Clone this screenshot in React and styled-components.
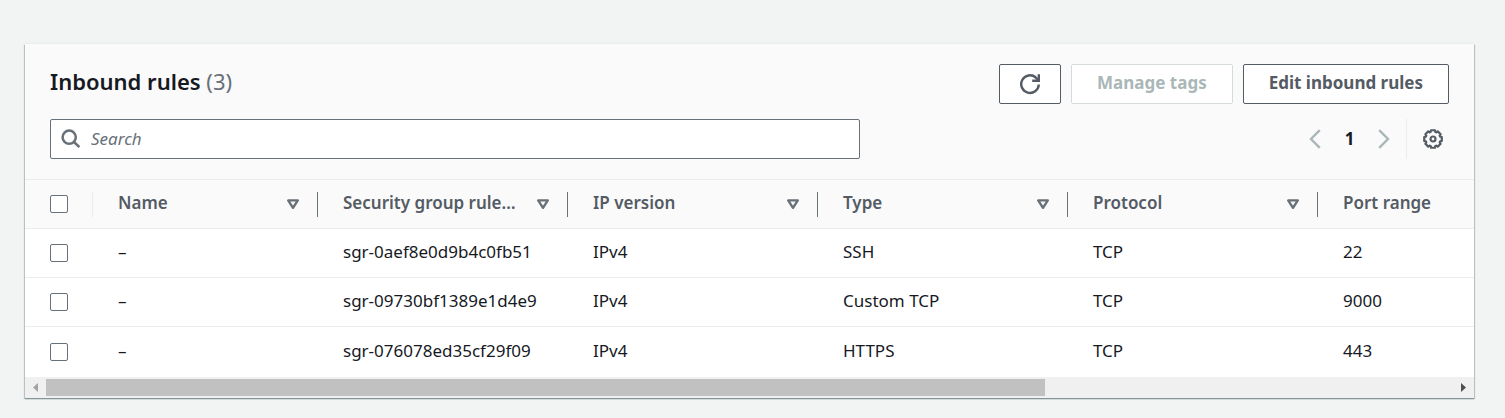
import React from "react";
import styled, { createGlobalStyle } from "styled-components";

const GlobalStyle = createGlobalStyle`
  * { box-sizing: border-box; }
  body {
    margin: 0;
    background: #f2f3f3;
    color: #16191f;
    font-family: "Noto Sans", "Open Sans", sans-serif;
    font-size: 17px;
    line-height: 24px;
  }
  button, input { font: inherit; }
`;

const Page = styled.main`
  padding: 44px 31px 19px 25px;
`;

const Panel = styled.section`
  background: #fff;
  overflow: hidden;
  box-shadow: 0 1px 1px 0 #879596, 1px 1px 1px 0 #c3cccd, -1px 1px 1px 0 #c3cccd, 0 -1px 1px 0 #eaeded;
`;

const Header = styled.header`
  display: flex;
  flex-direction: column;
  gap: 15px;
  padding: 20px 25px;
  background: #fafafa;
  border-bottom: 1px solid #eaeded;
`;

const HeaderRow = styled.div`
  display: flex;
  justify-content: space-between;
`;

const Title = styled.h2`
  margin: 0;
  font-size: 22px;
  line-height: 34px;
  font-weight: 600;
`;

const Count = styled.span`
  color: #687078;
  font-weight: 400;
`;

const Actions = styled.div`
  display: flex;
  gap: 10px;
`;

const Button = styled.button`
  display: flex;
  align-items: center;
  justify-content: center;
  height: 40px;
  padding: 0 25px 2px;
  border: 1px solid #545b64;
  border-radius: 2px;
  background: #fff;
  color: #545b64;
  font-weight: 700;
  white-space: nowrap;
  &:disabled { border-color: #d5dbdb; color: #aab7b8; }
`;

const RefreshButton = styled(Button)`
  width: 62px;
  padding: 0;
`;

const SearchBox = styled.label`
  display: flex;
  align-items: center;
  gap: 10px;
  width: 810px;
  height: 40px;
  padding: 0 10px;
  border: 1px solid #687078;
  border-radius: 2px;
  background: #fff;
  color: #687078;
`;

const SearchInput = styled.input`
  flex: 1;
  min-width: 0;
  padding: 0;
  border: 0;
  outline: 0;
  background: transparent;
  color: #16191f;
  &::placeholder { color: #687078; font-style: italic; opacity: 1; }
`;

const Pager = styled.nav`
  display: flex;
  align-items: center;
  height: 40px;
`;

const IconButton = styled.button`
  display: flex;
  align-items: center;
  justify-content: center;
  width: 32px;
  height: 32px;
  padding: 0;
  border: 0;
  background: transparent;
  color: #545b64;
  &:disabled { color: #aab7b8; }
`;

const PageNumber = styled.span`
  width: 37px;
  text-align: center;
  font-size: 17px;
  font-weight: 700;
`;

const Preferences = styled.div`
  display: flex;
  align-items: center;
  height: 40px;
  margin-left: 6px;
  padding-left: 10px;
  border-left: 1px solid #eaeded;
`;

const TableViewport = styled.div`
  overflow: hidden;
`;

const Table = styled.table`
  width: 1543px;
  table-layout: fixed;
  border-collapse: separate;
  border-spacing: 0;
`;

const Column = styled.col`
  width: ${(p) => p.$width}px;
`;

const HeadCell = styled.th`
  height: 49px;
  padding: 0;
  background: #fafafa;
  border-bottom: 1px solid #eaeded;
  color: #545b64;
  font-size: 17px;
  font-weight: 600;
  text-align: left;
`;

const HeadContent = styled.div`
  display: flex;
  align-items: center;
  justify-content: space-between;
  height: 25px;
  padding: 0 17px 0 25px;
  border-right: 1px solid ${(p) => (p.$light ? "#eaeded" : "#687078")};
`;

const HeadLabel = styled.span`
  padding-bottom: 2px;
  white-space: nowrap;
`;

const Cell = styled.td`
  height: 49px;
  padding: 0 25px 2px;
  border-bottom: 1px solid #eaeded;
  white-space: nowrap;
  tr:last-child & { height: 50px; border-bottom: 0; }
`;

const CheckCell = styled(Cell)`
  padding-bottom: 0;
`;

const Checkbox = styled.input`
  appearance: none;
  display: block;
  width: 18px;
  height: 18px;
  margin: 0;
  border: 1px solid #687078;
  border-radius: 2px;
  background: #fff;
  &:checked { background: #0073bb; }
`;

const ScrollBar = styled.div`
  display: grid;
  grid-template-columns: 21px 1fr 21px;
  align-items: center;
  justify-items: center;
  height: 21px;
  background: #f0f0f0;
`;

const Track = styled.div`
  width: 100%;
`;

const Thumb = styled.div`
  width: 71%;
  height: 17px;
  background: #c1c1c1;
`;

const SearchIcon = () => (
  <svg width="20" height="20" viewBox="0 0 20 20" fill="none" stroke="currentColor" strokeWidth="2.5" aria-hidden="true">
    <circle cx="8.2" cy="8.2" r="6.6" />
    <path d="M13 13l5.4 5.2" />
  </svg>
);

const RefreshIcon = () => (
  <svg width="22" height="22" viewBox="0 0 22 22" fill="none" stroke="currentColor" strokeWidth="2.4" aria-hidden="true">
    <path d="M19.8 11.5a8.8 8.8 0 1 1-3-7l2.6 3" />
    <path d="M19.8 1.2v6.6h-6.6" />
  </svg>
);

const Chevron = ({ next }) => (
  <svg width="12" height="20" viewBox="0 0 12 20" fill="none" stroke="currentColor" strokeWidth="2.4" aria-hidden="true">
    <path d={next ? "M1.2 1.2l8.8 8.8-8.8 8.8" : "M10.8 1.2L2 10l8.8 8.8"} />
  </svg>
);

// Eight teeth, each a flat outer edge joined to its neighbour by a short valley.
const gearPath = Array.from({ length: 8 }, (_, tooth) =>
  [[-13, 9], [13, 9], [18, 7.5], [27, 7.5]].map(([offset, radius]) => {
    const angle = ((tooth * 45 + offset) * Math.PI) / 180;
    return `${(11 + radius * Math.sin(angle)).toFixed(2)} ${(11 - radius * Math.cos(angle)).toFixed(2)}`;
  })
).flat().join("L");

const GearIcon = () => (
  <svg width="22" height="22" viewBox="0 0 22 22" fill="none" stroke="currentColor" strokeWidth="2.2" strokeLinejoin="round" aria-hidden="true">
    <path d={`M${gearPath}Z`} />
    <circle cx="11" cy="11" r="2.5" />
  </svg>
);

const SortIcon = () => (
  <svg width="14" height="12" viewBox="0 0 14 12" fill="none" stroke="#687078" strokeWidth="2.4" strokeLinejoin="round" aria-hidden="true">
    <path d="M2.2 2.4h9.6L7 9.8z" />
  </svg>
);

const ArrowIcon = ({ right }) => (
  <svg width="5" height="9" viewBox="0 0 5 9" aria-hidden="true">
    <path d={right ? "M0 0l5 4.5L0 9z" : "M5 0L0 4.5 5 9z"} fill={right ? "#505050" : "#a3a3a3"} />
  </svg>
);

const columns = ["Name", "Security group rule…", "IP version", "Type", "Protocol"];
const rules = [
  ["–", "sgr-0aef8e0d9b4c0fb51", "IPv4", "SSH", "TCP", "22"],
  ["–", "sgr-09730bf1389e1d4e9", "IPv4", "Custom TCP", "TCP", "9000"],
  ["–", "sgr-076078ed35cf29f09", "IPv4", "HTTPS", "TCP", "443"],
];

export default function App() {
  return (
    <Page>
      <GlobalStyle />
      <Panel>
        <Header>
          <HeaderRow>
            <Title>Inbound rules <Count>(3)</Count></Title>
            <Actions>
              <RefreshButton aria-label="Refresh"><RefreshIcon /></RefreshButton>
              <Button disabled>Manage tags</Button>
              <Button>Edit inbound rules</Button>
            </Actions>
          </HeaderRow>
          <HeaderRow>
            <SearchBox>
              <SearchIcon />
              <SearchInput type="text" placeholder="Search" aria-label="Search" />
            </SearchBox>
            <Pager aria-label="Pages">
              <IconButton disabled aria-label="Previous page"><Chevron /></IconButton>
              <PageNumber>1</PageNumber>
              <IconButton disabled aria-label="Next page"><Chevron next /></IconButton>
              <Preferences>
                <IconButton aria-label="Preferences"><GearIcon /></IconButton>
              </Preferences>
            </Pager>
          </HeaderRow>
        </Header>
        <TableViewport>
          <Table>
            <colgroup>
              <Column $width={68} />
              <Column $width={225} />
              <Column $width={250} />
              <Column $width={250} />
              <Column $width={250} />
              <Column $width={250} />
              <Column $width={250} />
            </colgroup>
            <thead>
              <tr>
                <HeadCell>
                  <HeadContent $light><Checkbox type="checkbox" aria-label="Select all rules" /></HeadContent>
                </HeadCell>
                {columns.map((name) => (
                  <HeadCell key={name}>
                    <HeadContent><HeadLabel>{name}</HeadLabel><SortIcon /></HeadContent>
                  </HeadCell>
                ))}
                <HeadCell><HeadContent><HeadLabel>Port range</HeadLabel></HeadContent></HeadCell>
              </tr>
            </thead>
            <tbody>
              {rules.map((rule) => (
                <tr key={rule[1]}>
                  <CheckCell><Checkbox type="checkbox" aria-label={`Select ${rule[1]}`} /></CheckCell>
                  {rule.map((value, i) => <Cell key={i}>{value}</Cell>)}
                </tr>
              ))}
            </tbody>
          </Table>
        </TableViewport>
        <ScrollBar aria-hidden="true">
          <ArrowIcon />
          <Track><Thumb /></Track>
          <ArrowIcon right />
        </ScrollBar>
      </Panel>
    </Page>
  );
}
